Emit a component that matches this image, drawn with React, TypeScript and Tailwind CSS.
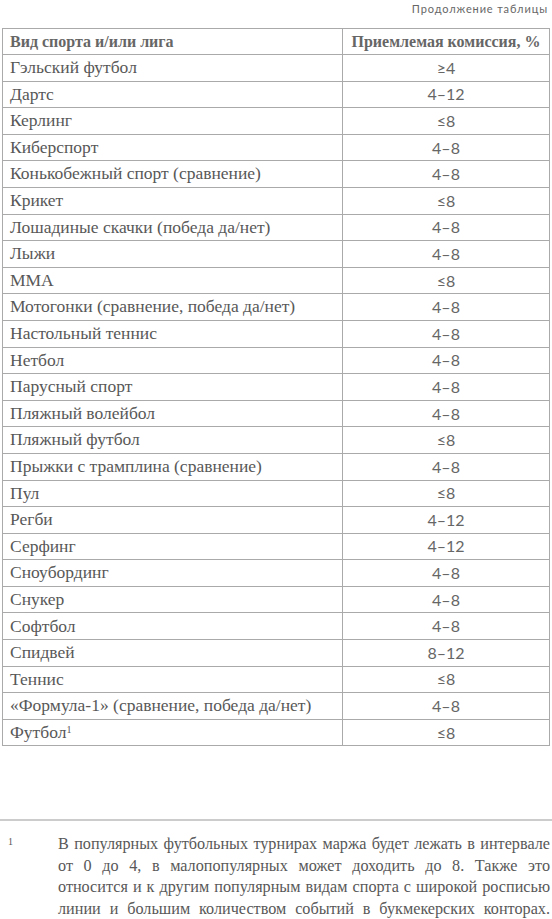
import * as React from "react"

const rows: [string, string][] = [
  ["Гэльский футбол", "≥4"],
  ["Дартс", "4–12"],
  ["Керлинг", "≤8"],
  ["Киберспорт", "4–8"],
  ["Конькобежный спорт (сравнение)", "4–8"],
  ["Крикет", "≤8"],
  ["Лошадиные скачки (победа да/нет)", "4–8"],
  ["Лыжи", "4–8"],
  ["ММА", "≤8"],
  ["Мотогонки (сравнение, победа да/нет)", "4–8"],
  ["Настольный теннис", "4–8"],
  ["Нетбол", "4–8"],
  ["Парусный спорт", "4–8"],
  ["Пляжный волейбол", "4–8"],
  ["Пляжный футбол", "≤8"],
  ["Прыжки с трамплина (сравнение)", "4–8"],
  ["Пул", "≤8"],
  ["Регби", "4–12"],
  ["Серфинг", "4–12"],
  ["Сноубординг", "4–8"],
  ["Снукер", "4–8"],
  ["Софтбол", "4–8"],
  ["Спидвей", "8–12"],
  ["Теннис", "≤8"],
  ["«Формула-1» (сравнение, победа да/нет)", "4–8"],
]

const serif = "font-['Liberation_Serif',serif]"
const cell = "border border-[#aaa] leading-none"

export default function App() {
  return (
    <div className="w-[552px] h-[919px] overflow-hidden bg-white text-[#585858]">
      <div className="h-[819px]">
        <div className="flex justify-end pr-[4px] pt-[1px] h-[28px]">
          <span className="font-['Lato',sans-serif] text-[11px] tracking-[0.08em] text-[#666]">
            Продолжение таблицы
          </span>
        </div>

        <table className={`mx-[2px] w-[548px] border-collapse ${serif} text-[17.5px]`}>
          <thead>
            <tr className="h-[26px]">
              <th className={`${cell} px-[7px] text-left text-[16px] font-bold text-[#666]`}>
                Вид спорта и/или лига
              </th>
              <th className={`${cell} w-[207px] px-[2px] text-center text-[16px] font-bold text-[#666] whitespace-nowrap`}>
                Приемлемая комиссия, %
              </th>
            </tr>
          </thead>
          <tbody>
            {rows.map(([name, value]) => (
              <tr key={name} className="h-[26.6px]">
                <td className={`${cell} px-[7px]`}>{name}</td>
                <td className={`${cell} text-center font-['Lato',sans-serif] text-[16px] text-[#666]`}>
                  {value}
                </td>
              </tr>
            ))}
            <tr className="h-[26.6px]">
              <td className={`${cell} px-[7px]`}>
                Футбол<sup className="text-[10px]">1</sup>
              </td>
              <td className={`${cell} text-center font-['Lato',sans-serif] text-[16px] text-[#666]`}>≤8</td>
            </tr>
          </tbody>
        </table>
      </div>

      <div className="border-t-2 border-[#ccc]" />

      <div className={`flex pt-[13px] ${serif} text-[16.2px] leading-[21.7px]`}>
        <span className="w-[58px] shrink-0 pl-[8px] text-[10px] leading-[16px]">1</span>
        <p className="w-[492px] text-justify [text-align-last:justify]">
          В популярных футбольных турнирах маржа будет лежать в интервале от 0 до 4, в малопопулярных может
          доходить до 8. Также это относится и к другим популярным видам спорта с широкой росписью линии и
          большим количеством событий в букмекерских конторах.
        </p>
      </div>
    </div>
  )
}
